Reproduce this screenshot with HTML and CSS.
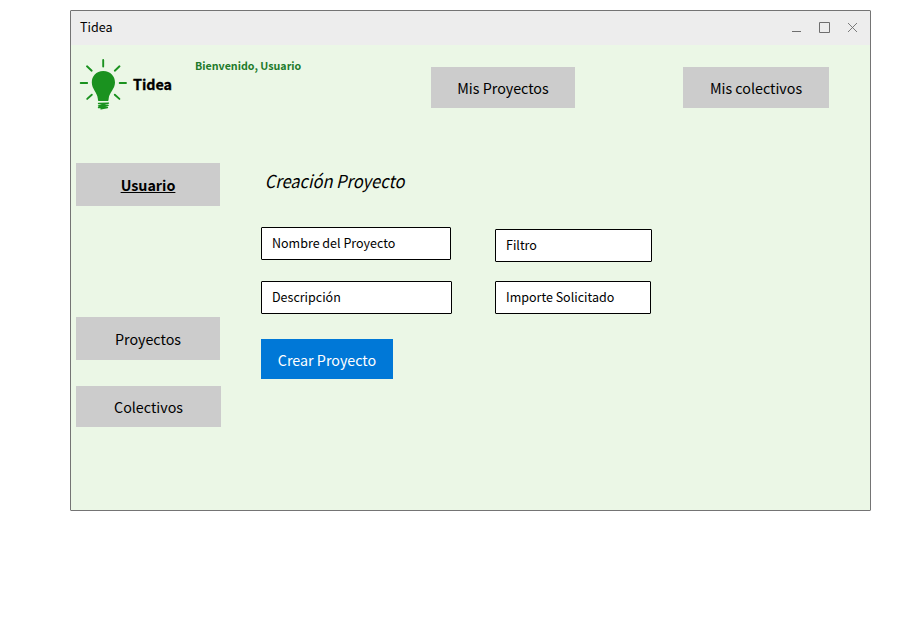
FILE: index.html
```html
<!DOCTYPE html>
<html lang="es">
<head>
<meta charset="utf-8">
<title>Tidea</title>
<link rel="stylesheet" href="styles.css">
</head>
<body>
<div class="window">
  <div class="titlebar">
    <span class="title">Tidea</span>
    <svg class="controls" width="68" height="14" viewBox="0 0 68 14" fill="none" stroke="#6e6e6e">
      <path d="M1 10.500h9"/>
      <path d="M28.500 1.500h10v10h-10z"/>
      <path d="M57 2l9 9M66 2l-9 9" stroke-width=".9"/>
    </svg>
  </div>
  <header class="header">
    <svg class="bulb" width="50" height="54" viewBox="0 0 50 54">
      <path fill="#1a921f" d="M25.300 14C18 14 13.800 19.300 13.800 25.500C13.800 32 19.300 35.500 19.800 41.500Q20 44 20.500 44H30Q30.500 44 30.700 41.500C31.200 35.500 37 32 37 25.500C37 19.300 32.600 14 25.300 14Z"/>
      <path fill="none" stroke="#1a921f" stroke-width="1.900" stroke-linecap="round" d="M25.200 3v6.500M9 9.300l4.700 4.400M41.500 9.300l-4.700 4.400M2.700 26h6.500M41.700 26h6.300M13.800 37.700l-4.600 4.200M36.800 37.700l4.600 4.200"/>
      <path fill="none" stroke="#1a921f" stroke-width="1.300" stroke-linecap="round" stroke-linejoin="round" d="M20.500 46.500l10-.3L20.500 48.800l9.700-.4L20.500 50.500h9L23 51.800"/>
    </svg>
    <strong class="brand">Tidea</strong>
    <strong class="welcome">Bienvenido, Usuario</strong>
    <nav class="topnav">
      <a class="button projects">Mis Proyectos</a>
      <a class="button groups">Mis colectivos</a>
    </nav>
  </header>
  <div class="content">
    <nav class="sidebar">
      <a class="button user">Usuario</a>
      <a class="button side-projects">Proyectos</a>
      <a class="button side-groups">Colectivos</a>
    </nav>
    <main class="main">
      <h1 class="heading">Creación Proyecto</h1>
      <div class="form">
        <div class="column left">
          <div class="field name">Nombre del Proyecto</div>
          <div class="field description">Descripción</div>
          <a class="submit">Crear Proyecto</a>
        </div>
        <div class="column right">
          <div class="field filter">Filtro</div>
          <div class="field amount">Importe Solicitado</div>
        </div>
      </div>
    </main>
  </div>
</div>
</body>
</html>
```

FILE: styles.css
```css
* { box-sizing: border-box; }

body {
  margin: 0;
  padding: 10px 0 0 70px;
  background: #fff;
  color: #000;
  font-family: "Noto Sans CJK SC", "Noto Sans", sans-serif;
  white-space: nowrap;
}

.window {
  width: 801px;
  height: 501px;
  border: 1px solid #747474;
  border-radius: 1px;
  background: #ebf7e6;
}

.titlebar {
  display: flex;
  align-items: center;
  justify-content: space-between;
  height: 34px;
  padding: 0 11px 0 9px;
  background: #ededed;
}

.title {
  padding-bottom: 2px;
  font-size: 12.5px;
  line-height: 20px;
}

.header {
  display: flex;
  align-items: flex-start;
  height: 118px;
  padding-left: 7px;
}

.bulb { margin-top: 12px; }

.brand {
  width: 62px;
  margin: 27px 0 0 5px;
  font-size: 14.3px;
  line-height: 24px;
  -webkit-text-stroke: .3px #000;
}

.welcome {
  width: 236px;
  margin-top: 12px;
  color: #217a2b;
  font-size: 10.7px;
  line-height: 18px;
}

.topnav {
  display: flex;
  gap: 108px;
  margin-top: 22px;
}

.button,
.submit {
  display: flex;
  align-items: center;
  justify-content: center;
  height: 41px;
  background: #ccc;
  font-size: 14.3px;
  line-height: 24px;
}

.projects { width: 144px; }
.groups { width: 146px; }

.content { display: flex; }

.sidebar {
  display: flex;
  flex-direction: column;
  width: 190px;
  padding-left: 5px;
}

.user {
  width: 144px;
  height: 43px;
  margin-bottom: 111px;
  font-weight: 700;
  text-decoration: underline;
}

.side-projects {
  width: 144px;
  height: 43px;
  margin-bottom: 26px;
}

.side-groups { width: 145px; }

.heading {
  height: 64px;
  margin: 0;
  padding: 3px 0 0 4px;
  font-size: 17.8px;
  font-style: italic;
  font-weight: 400;
  line-height: 28px;
  transform: scaleX(.925);
  transform-origin: left;
}

.form {
  display: flex;
  gap: 43px;
}

.column {
  display: flex;
  flex-direction: column;
}

.left { width: 191px; }
.right { padding-top: 2px; }

.field {
  height: 33px;
  padding-left: 10px;
  border: 1px solid #000;
  border-radius: 1px;
  background: #fff;
  font-size: 12.5px;
  line-height: 29px;
}

.name { width: 190px; margin-bottom: 21px; }
.description { width: 191px; margin-bottom: 25px; }
.filter { width: 157px; margin-bottom: 19px; }
.amount { width: 156px; }

.submit {
  width: 132px;
  height: 40px;
  padding-top: 2px;
  background: #0078d7;
  color: #fff;
}
```
